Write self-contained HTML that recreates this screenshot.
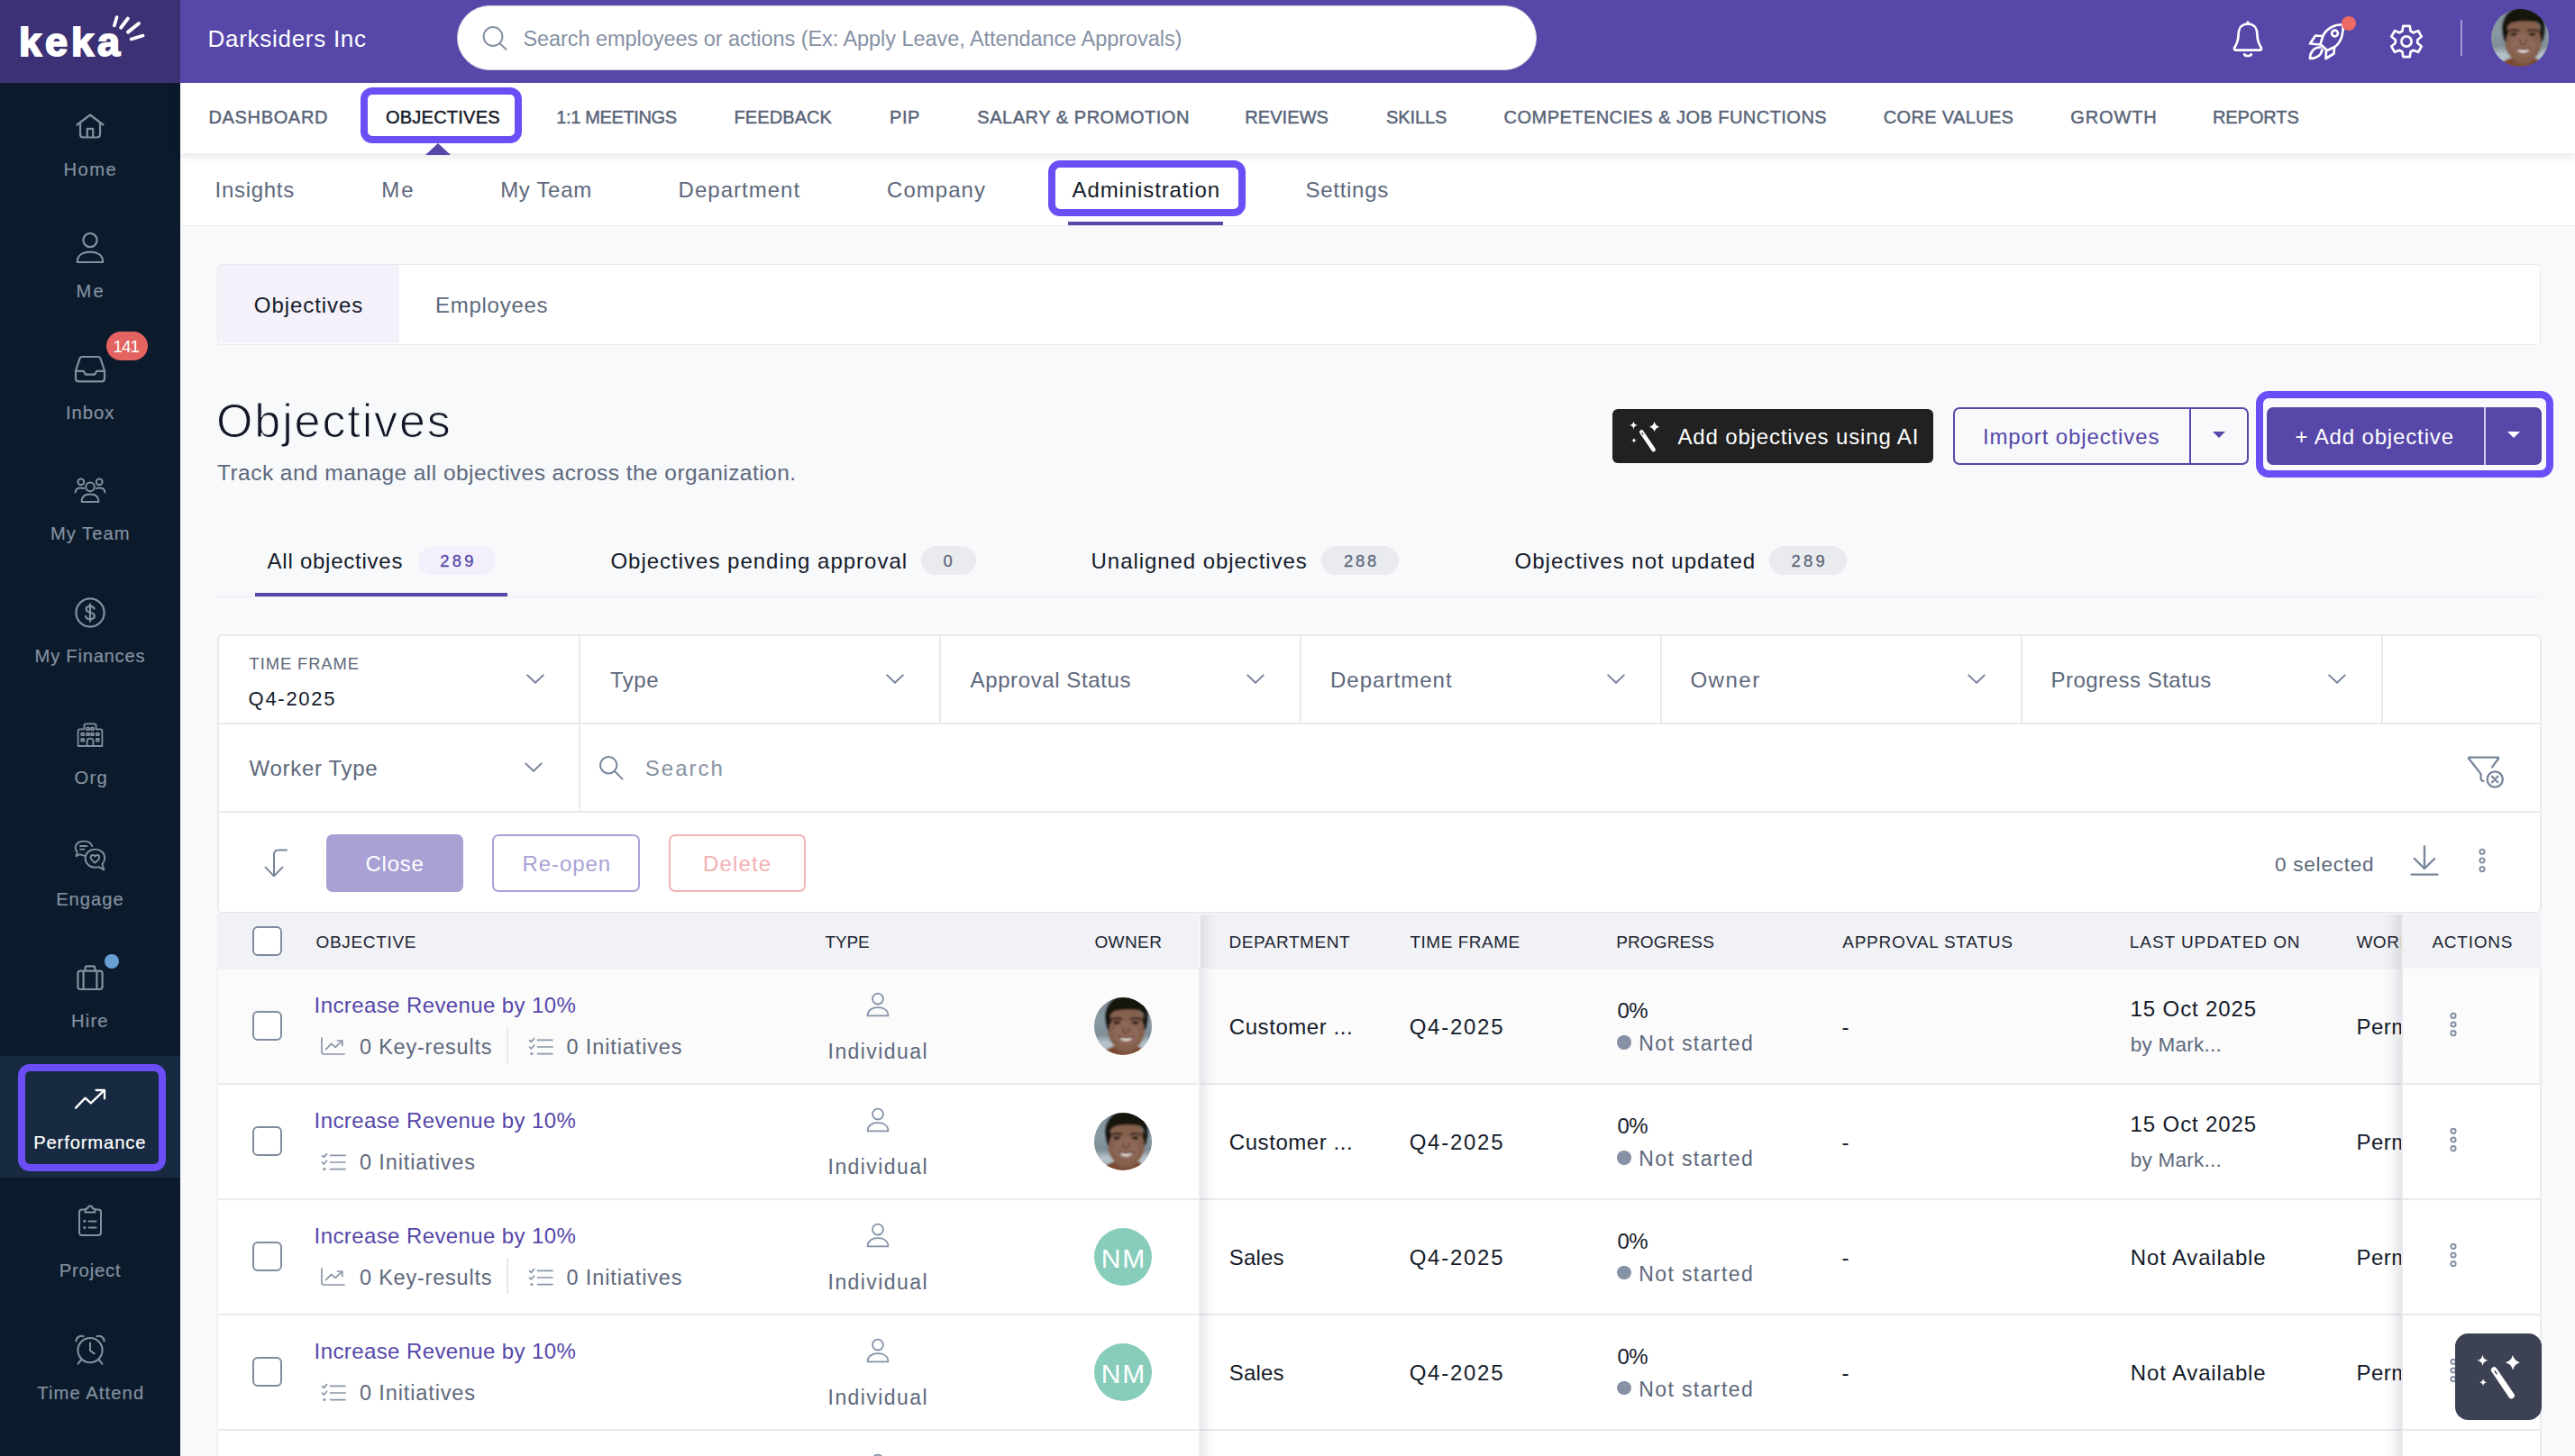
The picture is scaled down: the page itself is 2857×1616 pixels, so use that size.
<!DOCTYPE html>
<html lang="en"><head><meta charset="utf-8"><title>Keka - Objectives</title>
<style>
*{box-sizing:border-box;margin:0;padding:0}
html,body{width:2857px;height:1616px;background:#f8f9fb;font-family:"Liberation Sans", sans-serif;}
#root{position:relative;width:2857px;height:1616px;overflow:hidden}
#root div,#root span.t,#root svg{position:absolute}
#root svg{overflow:visible}
span.t{white-space:nowrap;line-height:1;display:block}
</style></head>
<body><div id="root">
<div style="left:200px;top:0px;width:2657px;height:92px;background:#5647a9;"></div>
<div style="left:0px;top:0px;width:200px;height:92px;background:#3b3174;"></div>
<div style="left:0px;top:92px;width:200px;height:1524px;background:#0c1b2b;"></div>
<span class="t" style="left:24px;top:24px;font-size:45px;color:#fff;font-weight:700;-webkit-text-stroke:2px #fff;letter-spacing:3.973px;margin-left:-3.00px;">keka</span>
<svg style="left:120px;top:12px;" width="48" height="40" viewBox="0 0 48 40" fill="none"><g stroke="#fff" stroke-linecap="round"><path d="M6.8 16.5 L9.6 7" stroke-width="3.6"/><path d="M14.2 18.6 L21.8 8.6" stroke-width="4"/><path d="M22 23.6 L34 14" stroke-width="4"/><path d="M25.6 31.4 L38.6 27.6" stroke-width="3.6"/></g></svg>
<span class="t" style="left:232.5px;top:30px;font-size:26px;color:#fff;letter-spacing:0.719px;margin-left:-2.00px;">Darksiders Inc</span>
<div style="left:506.6px;top:6px;width:1198.6px;height:71.6px;background:#fff;border-radius:36px;border:1.5px solid #d3d4e0;"></div>
<svg style="left:533px;top:27px;" width="32" height="32" viewBox="0 0 32 32" fill="none"><circle cx="14" cy="13.5" r="10.4" stroke="#8590a2" stroke-width="2"/><path d="M21.4 21 L28.4 27.8" stroke="#8590a2" stroke-width="2" stroke-linecap="round"/></svg>
<span class="t" style="left:581.4px;top:32px;font-size:23.5px;color:#8691a4;letter-spacing:-0.047px;margin-left:-1.00px;">Search employees or actions (Ex: Apply Leave, Attendance Approvals)</span>
<svg style="left:2474px;top:20px;" width="40" height="48" viewBox="0 0 40 48" fill="none"><g stroke="#fff" stroke-width="2.7" stroke-linejoin="round" stroke-linecap="round"><path d="M20 4.5 L20 6.5"/><path d="M20 6.5 C12 6.5 9.5 13 9.5 19 C9.5 26 7 30 5.2 33 C4.6 34.2 5.2 35.6 6.8 35.6 L33.2 35.6 C34.8 35.6 35.4 34.2 34.8 33 C33 30 30.5 26 30.5 19 C30.5 13 28 6.5 20 6.5 Z"/><path d="M16.2 40.2 C17 42.6 23 42.6 23.8 40.2"/></g></svg>
<svg style="left:2558px;top:22px;" width="48" height="48" viewBox="0 0 48 48" fill="none"><g stroke="#fff" stroke-width="2.7" stroke-linejoin="round" stroke-linecap="round"><path d="M41.5 5.5 C33 5 24 8.5 19.5 17.5 L16.5 27 L24 34 L32.5 30 C40 24.5 42.5 14 41.5 5.5 Z"/><circle cx="32.5" cy="15" r="3.4"/><path d="M19 18 L11 17.5 L5 26.5 L16 27.5"/><path d="M32 30.5 L31.5 37.5 L22.5 43 L23 34"/><path d="M16.5 30.5 C9 30.5 5 36 5 43 C12 43 17.5 39.5 18.5 33"/></g></svg>
<div style="left:2598px;top:18px;width:16px;height:16px;border-radius:50%;background:#ed6a66"></div>
<svg style="left:2648px;top:24px;" width="44" height="44" viewBox="0 0 44 44" fill="none"><path d="M17.44 10.47 L18.34 4.78 L25.66 4.78 L26.56 10.47 L29.70 12.28 L35.08 10.22 L38.74 16.56 L34.27 20.19 L34.27 23.81 L38.74 27.44 L35.08 33.78 L29.70 31.72 L26.56 33.53 L25.66 39.22 L18.34 39.22 L17.44 33.53 L14.30 31.72 L8.92 33.78 L5.26 27.44 L9.73 23.81 L9.73 20.19 L5.26 16.56 L8.92 10.22 L14.30 12.28 Z" stroke="#fff" stroke-width="2.7" stroke-linejoin="round"/><circle cx="22" cy="22" r="5.6" stroke="#fff" stroke-width="2.7"/></svg>
<div style="left:2730px;top:22px;width:2px;height:40px;background:#a49cd6;"></div>
<svg style="left:2764px;top:10px;" width="64" height="64" viewBox="0 0 64 64" fill="none"><defs><clipPath id="av2796_42"><circle cx="32" cy="32" r="32"/></clipPath><filter id="bl2796_42" x="-10%" y="-10%" width="120%" height="120%"><feGaussianBlur stdDeviation="1.3"/></filter><linearGradient id="bg2796_42" x1="0" y1="0" x2="0" y2="1"><stop offset="0" stop-color="#7f8e96"/><stop offset=".45" stop-color="#8a9aa4"/><stop offset=".62" stop-color="#7d8c95"/><stop offset=".74" stop-color="#b7c3ca"/><stop offset="1" stop-color="#a9b5bc"/></linearGradient></defs><g clip-path="url(#av2796_42)"><g filter="url(#bl2796_42)"><rect x="-6" y="-6" width="76" height="76" fill="url(#bg2796_42)"/><path d="M8 70 C9 58 18 53 35 53 C52 53 60 58 62 70 Z" fill="#7a4a2e"/><path d="M25 50 H46 V58 C41 64 30 64 25 58 Z" fill="#7d5645"/><ellipse cx="35.6" cy="36.5" rx="20.4" ry="23" fill="#85604e"/><ellipse cx="35.6" cy="25" rx="19.6" ry="15" fill="#85604e"/><ellipse cx="35.6" cy="40" rx="14" ry="13" fill="#8e6858"/><path d="M13 30 C8 12 20 -3 36 -3 C52 -3 64 12 59 30 C58 24 55 17 50 14.5 C42 13 30 13 22 15.5 C17 19 14.5 24 13 30 Z" fill="#16130f"/><path d="M13 30 C13.5 26 15 22 18 19 L19 28 C17 29 16.5 33 16.8 37 C14.5 36 13.2 33 13 30 Z" fill="#16130f"/><path d="M59 30 C58.5 26 57 22 54 19 L53.5 28 C55 29 55.5 33 55.2 37 C57.5 36 58.8 33 59 30 Z" fill="#16130f"/><path d="M28.6 44.6 C32 46 39 46 42.2 44.6 C41 49.6 30 49.6 28.6 44.6 Z" fill="#f3ebe6"/><path d="M26.5 43.6 C31 45.2 40 45.2 44.4 43.6" stroke="#5e3c30" stroke-width="1.4" fill="none"/><path d="M19.6 24.6 C23 22.8 27 22.8 30 24 M41 24 C44 22.8 48.4 22.8 51.6 24.6" stroke="#2a1b15" stroke-width="2.2" stroke-linecap="round"/><ellipse cx="25" cy="28" rx="3.8" ry="1.8" fill="#2b1c16"/><ellipse cx="45.4" cy="28" rx="3.8" ry="1.8" fill="#2b1c16"/><path d="M32.4 33 C31.2 37.6 32.4 39.2 35.4 39.4 C38.4 39.2 39.6 37.6 38.4 33" stroke="#6a4838" stroke-width="1.6" fill="none"/></g></g></svg>
<svg style="left:82px;top:124px;" width="36" height="32" viewBox="0 0 36 32" fill="none"><g stroke="#8390a0" stroke-width="2.2" stroke-linecap="round" stroke-linejoin="round"><path d="M3.5 14.5 L18 3.5 L32.5 14.5"/><path d="M7 12.5 V25 C7 27 8 28.5 10.5 28.5 H25.5 C28 28.5 29 27 29 25 V12.5"/><path d="M14.8 28 V18.8 H21.2 V28"/></g></svg>
<span class="t" style="left:71.5px;top:178px;font-size:20.2px;color:#8491a1;-webkit-text-stroke:0.2px #8491a1;letter-spacing:1.493px;margin-left:-1.00px;">Home</span>
<svg style="left:82px;top:256px;" width="36" height="38" viewBox="0 0 36 38" fill="none"><g stroke="#8390a0" stroke-width="2.2" stroke-linecap="round" stroke-linejoin="round"><circle cx="18" cy="10.5" r="7.6"/><path d="M3.8 35 C3.8 27 10 23.6 18 23.6 C26 23.6 32.2 27 32.2 35 Z"/></g></svg>
<span class="t" style="left:85.6px;top:313px;font-size:20.2px;color:#8491a1;-webkit-text-stroke:0.2px #8491a1;letter-spacing:1.984px;margin-left:-1.00px;">Me</span>
<svg style="left:80px;top:393px;" width="40" height="34" viewBox="0 0 40 34" fill="none"><g stroke="#8390a0" stroke-width="2.2" stroke-linecap="round" stroke-linejoin="round"><path d="M4 18.5 L8.6 4.6 C9 3.6 9.8 3 11 3 H29 C30.2 3 31 3.6 31.4 4.6 L36 18.5 V27 C36 29.2 34.8 30.4 32.6 30.4 H7.4 C5.2 30.4 4 29.2 4 27 Z"/><path d="M4 18.8 H12.6 L15 22.6 H25 L27.4 18.8 H36"/></g></svg>
<div style="left:118px;top:368px;width:46px;height:32px;border-radius:16px;background:#e2635f"></div>
<span class="t" style="left:126.4px;top:375px;font-size:19px;color:#fff;letter-spacing:-1.067px;margin-left:-1.00px;">141</span>
<span class="t" style="left:74px;top:448px;font-size:20.2px;color:#8491a1;-webkit-text-stroke:0.2px #8491a1;letter-spacing:0.977px;margin-left:-1.00px;">Inbox</span>
<svg style="left:80px;top:528px;" width="40" height="32" viewBox="0 0 40 32" fill="none"><g stroke="#8390a0" stroke-width="2" stroke-linecap="round" stroke-linejoin="round"><circle cx="20" cy="12.4" r="4.8"/><path d="M10.6 29 C10.6 23 14.6 20.6 20 20.6 C25.4 20.6 29.4 23 29.4 29 Z"/><circle cx="9.8" cy="6.8" r="3.4"/><circle cx="30.2" cy="6.8" r="3.4"/><path d="M3.6 18.4 C3.8 14.8 6.4 13.4 9.8 13.4 C11 13.4 12 13.6 13 14"/><path d="M36.4 18.4 C36.2 14.8 33.6 13.4 30.2 13.4 C29 13.4 28 13.6 27 14"/></g></svg>
<span class="t" style="left:57px;top:582px;font-size:20.2px;color:#8491a1;-webkit-text-stroke:0.2px #8491a1;letter-spacing:0.989px;margin-left:-1.00px;">My Team</span>
<svg style="left:80px;top:660px;" width="40" height="40" viewBox="0 0 40 40" fill="none"><g stroke="#8390a0" stroke-width="2.2" stroke-linecap="round" stroke-linejoin="round"><circle cx="20" cy="20" r="15.6"/><path d="M24.6 15.6 C24 13.6 22.2 12.8 20 12.8 C17.4 12.8 15.6 14 15.6 16.2 C15.6 20.8 24.8 18.6 24.8 23.6 C24.8 26 22.6 27.2 20 27.2 C17.4 27.2 15.6 26.2 15 24"/><path d="M20 10.4 V29.6"/></g></svg>
<span class="t" style="left:39.6px;top:718px;font-size:20.2px;color:#8491a1;-webkit-text-stroke:0.2px #8491a1;letter-spacing:0.746px;margin-left:-1.00px;">My Finances</span>
<svg style="left:82px;top:799px;" width="36" height="32" viewBox="0 0 36 32" fill="none"><g stroke="#8390a0" stroke-width="1.8" stroke-linecap="round" stroke-linejoin="round"><path d="M4.6 29 V12.6 C4.6 11.2 5.4 10.4 6.8 10.4 H11.4 V6.6 C11.4 5.2 12.2 4.4 13.6 4.4 H22.4 C23.8 4.4 24.6 5.2 24.6 6.6 V10.4 H29.2 C30.6 10.4 31.4 11.2 31.4 12.6 V29 Z"/><path d="M14.6 29 V23.4 C14.6 21.6 16 20.6 18 20.6 C20 20.6 21.4 21.6 21.4 23.4 V29"/><rect x="8.2" y="14.6" width="3" height="2.6" rx=".6"/><rect x="8.2" y="21" width="3" height="2.6" rx=".6"/><rect x="24.8" y="14.6" width="3" height="2.6" rx=".6"/><rect x="24.8" y="21" width="3" height="2.6" rx=".6"/><rect x="14" y="8.6" width="3" height="2.6" rx=".6"/><rect x="19" y="8.6" width="3" height="2.6" rx=".6"/><rect x="14" y="14.6" width="3" height="2.6" rx=".6"/><rect x="19" y="14.6" width="3" height="2.6" rx=".6"/></g></svg>
<span class="t" style="left:82.5px;top:853px;font-size:20.2px;color:#8491a1;-webkit-text-stroke:0.2px #8491a1;letter-spacing:1.287px;">Org</span>
<svg style="left:80px;top:930px;" width="40" height="40" viewBox="0 0 40 40" fill="none"><g stroke="#8390a0" stroke-width="1.9" stroke-linecap="round" stroke-linejoin="round"><path d="M13.4 19.6 C11.8 19.4 10.4 19 9 18.2 L4.4 20.2 L5.8 15.8 C4.4 14.4 3.6 12.6 3.6 10.8 C3.6 6.6 7.6 3.6 13 3.6 C17.6 3.6 21.2 5.8 22.2 9"/><path d="M9 9 H16.4 M9 12.6 H13.4" /><path d="M25.4 12.6 C31.4 12.6 36.2 16.6 36.2 22.2 C36.2 24.8 35.2 27.2 33.4 29 L35.4 35.4 L29.4 32.2 C28.2 32.6 26.8 32.8 25.4 32.8 C19.4 32.8 14.6 28.2 14.6 22.6 C14.6 17 19.4 12.6 25.4 12.6 Z"/><path d="M25.4 27.6 C22.4 25.6 20.6 23.8 20.6 21.6 C20.6 20 21.8 19 23 19 C24 19 24.9 19.6 25.4 20.6 C25.9 19.6 26.8 19 27.8 19 C29 19 30.2 20 30.2 21.6 C30.2 23.8 28.4 25.6 25.4 27.6 Z"/></g></svg>
<span class="t" style="left:63.2px;top:988px;font-size:20.2px;color:#8491a1;-webkit-text-stroke:0.2px #8491a1;letter-spacing:0.965px;margin-left:-1.00px;">Engage</span>
<svg style="left:82px;top:1068px;" width="36" height="34" viewBox="0 0 36 34" fill="none"><g stroke="#8390a0" stroke-width="2.2" stroke-linecap="round" stroke-linejoin="round"><rect x="4.4" y="9.6" width="27.2" height="20.4" rx="3"/><path d="M12.6 9.4 V6.6 C12.6 5.2 13.4 4.4 14.8 4.4 H21.2 C22.6 4.4 23.4 5.2 23.4 6.6 V9.4"/><path d="M10.6 10 V29.6 M25.4 10 V29.6"/></g></svg>
<div style="left:116px;top:1058.6px;width:16.4px;height:16.4px;border-radius:50%;background:#6a9fd6"></div>
<span class="t" style="left:80px;top:1123px;font-size:20.2px;color:#8491a1;-webkit-text-stroke:0.2px #8491a1;letter-spacing:1.171px;margin-left:-1.00px;">Hire</span>
<div style="left:0px;top:1172px;width:200px;height:134.5px;background:#172a41;"></div>
<div style="left:20.3px;top:1181.3px;width:163.7px;height:119px;background:transparent;border:8.5px solid #6b4ef6;border-radius:13px;"></div>
<svg style="left:80px;top:1204px;" width="40" height="32" viewBox="0 0 40 32" fill="none"><g stroke="#fff" stroke-width="2.3" stroke-linecap="round" stroke-linejoin="round"><path d="M4 25.6 L14.6 14.6 L20.8 20.4 L35.4 6.4"/><path d="M26.6 6 H36 V15.4"/></g></svg>
<span class="t" style="left:38.2px;top:1258px;font-size:20.2px;color:#fff;-webkit-text-stroke:0.2px #fff;letter-spacing:0.866px;margin-left:-1.00px;">Performance</span>
<svg style="left:84px;top:1335px;" width="32" height="40" viewBox="0 0 32 40" fill="none"><g stroke="#8390a0" stroke-width="2" stroke-linecap="round" stroke-linejoin="round"><path d="M11.4 7.4 H7 C5 7.4 4 8.4 4 10.4 V33 C4 35 5 36 7 36 H25 C27 36 28 35 28 33 V10.4 C28 8.4 27 7.4 25 7.4 H20.6"/><path d="M10.6 10.6 H21.4 V8 C21.4 6.8 20.6 6.2 19.6 6.2 H18.6 C18.6 4.6 17.6 3.6 16 3.6 C14.4 3.6 13.4 4.6 13.4 6.2 H12.4 C11.4 6.2 10.6 6.8 10.6 8 Z"/><path d="M14.6 20.4 H22.6 M14.6 27.6 H22.6"/><path d="M9.6 20.4 H10 M9.6 27.6 H10" stroke-width="2.8"/></g></svg>
<span class="t" style="left:66.7px;top:1400px;font-size:20.2px;color:#8491a1;-webkit-text-stroke:0.2px #8491a1;letter-spacing:0.847px;margin-left:-1.00px;">Project</span>
<svg style="left:80px;top:1478px;" width="40" height="40" viewBox="0 0 40 40" fill="none"><g stroke="#8390a0" stroke-width="2.1" stroke-linecap="round" stroke-linejoin="round"><circle cx="20" cy="20.6" r="13.6"/><path d="M20 12.6 V21 L24.6 24.4"/><path d="M4.4 10.4 C4.4 6.6 8.6 3.6 12.6 5.2 M35.6 10.4 C35.6 6.6 31.4 3.6 27.4 5.2"/><path d="M10.4 30.8 L6.6 35.6 M29.6 30.8 L33.4 35.6"/></g></svg>
<span class="t" style="left:41.3px;top:1536px;font-size:20.2px;color:#8491a1;-webkit-text-stroke:0.2px #8491a1;letter-spacing:1.084px;">Time Attend</span>
<div style="left:200px;top:170px;width:2657px;height:80.5px;background:#fff;border-bottom:1.5px solid #e8eaee;"></div>
<div style="left:200px;top:92px;width:2657px;height:78px;background:#fff;box-shadow:0 3px 10px rgba(30,40,70,.13);"></div>
<span class="t" style="left:232.4px;top:120px;font-size:20px;color:#586478;-webkit-text-stroke:0.45px #586478;letter-spacing:0.669px;margin-left:-1.00px;">DASHBOARD</span>
<span class="t" style="left:618.2px;top:120px;font-size:20px;color:#586478;-webkit-text-stroke:0.45px #586478;letter-spacing:-0.352px;margin-left:-1.00px;">1:1 MEETINGS</span>
<span class="t" style="left:815.5px;top:120px;font-size:20px;color:#586478;-webkit-text-stroke:0.45px #586478;letter-spacing:0.091px;margin-left:-1.00px;">FEEDBACK</span>
<span class="t" style="left:988px;top:120px;font-size:20px;color:#586478;-webkit-text-stroke:0.45px #586478;letter-spacing:0.552px;margin-left:-1.00px;">PIP</span>
<span class="t" style="left:1084.3px;top:120px;font-size:20px;color:#586478;-webkit-text-stroke:0.45px #586478;letter-spacing:0.535px;">SALARY &amp; PROMOTION</span>
<span class="t" style="left:1382.3px;top:120px;font-size:20px;color:#586478;-webkit-text-stroke:0.45px #586478;letter-spacing:0.067px;margin-left:-1.00px;">REVIEWS</span>
<span class="t" style="left:1538px;top:120px;font-size:20px;color:#586478;-webkit-text-stroke:0.45px #586478;letter-spacing:-0.096px;">SKILLS</span>
<span class="t" style="left:1669.6px;top:120px;font-size:20px;color:#586478;-webkit-text-stroke:0.45px #586478;letter-spacing:0.461px;margin-left:-1.00px;">COMPETENCIES &amp; JOB FUNCTIONS</span>
<span class="t" style="left:2090.7px;top:120px;font-size:20px;color:#586478;-webkit-text-stroke:0.45px #586478;letter-spacing:0.346px;margin-left:-1.00px;">CORE VALUES</span>
<span class="t" style="left:2298.3px;top:120px;font-size:20px;color:#586478;-webkit-text-stroke:0.45px #586478;letter-spacing:0.870px;margin-left:-1.00px;">GROWTH</span>
<span class="t" style="left:2456px;top:120px;font-size:20px;color:#586478;-webkit-text-stroke:0.45px #586478;letter-spacing:-0.080px;margin-left:-1.00px;">REPORTS</span>
<div style="left:472px;top:158.6px;width:0;height:0;border-left:14px solid transparent;border-right:14px solid transparent;border-bottom:13.2px solid #5647a9"></div>
<div style="left:399.8px;top:97px;width:179.6px;height:62px;background:#fff;border:8.4px solid #6b4ef6;border-radius:13px;"></div>
<span class="t" style="left:428px;top:120px;font-size:20px;color:#141a29;-webkit-text-stroke:0.45px #141a29;letter-spacing:0.230px;">OBJECTIVES</span>
<span class="t" style="left:240.6px;top:199px;font-size:24px;color:#5d687b;letter-spacing:0.698px;margin-left:-2.00px;">Insights</span>
<span class="t" style="left:424.3px;top:199px;font-size:24px;color:#5d687b;letter-spacing:1.908px;margin-left:-1.00px;">Me</span>
<span class="t" style="left:556.2px;top:199px;font-size:24px;color:#5d687b;letter-spacing:0.674px;margin-left:-1.00px;">My Team</span>
<span class="t" style="left:753.6px;top:199px;font-size:24px;color:#5d687b;letter-spacing:1.009px;margin-left:-1.00px;">Department</span>
<span class="t" style="left:985px;top:199px;font-size:24px;color:#5d687b;letter-spacing:1.048px;margin-left:-1.00px;">Company</span>
<span class="t" style="left:1449.5px;top:199px;font-size:24px;color:#5d687b;letter-spacing:0.712px;margin-left:-1.00px;">Settings</span>
<div style="left:1185px;top:246px;width:171.8px;height:3.9px;background:#5647a9;"></div>
<div style="left:1162.5px;top:178px;width:219px;height:62.4px;background:#fff;border:8.4px solid #6b4ef6;border-radius:13px;"></div>
<span class="t" style="left:1189.6px;top:199px;font-size:24px;color:#141a29;letter-spacing:0.883px;">Administration</span>
<div style="left:240.8px;top:293px;width:2578.4px;height:89.6px;background:#fff;border:1.5px solid #e8eaee;border-radius:4px;"></div>
<div style="left:242px;top:294.2px;width:200.6px;height:87.2px;background:#f4f1fb;border-radius:3px 0 0 3px;"></div>
<span class="t" style="left:282.8px;top:327px;font-size:24px;color:#141a29;letter-spacing:0.929px;margin-left:-1.00px;">Objectives</span>
<span class="t" style="left:484px;top:327px;font-size:24px;color:#5d687b;letter-spacing:0.735px;margin-left:-1.00px;">Employees</span>
<span class="t" style="left:242px;top:441px;font-size:52px;color:#111726;letter-spacing:1.893px;margin-left:-2.00px;-webkit-text-stroke:1.1px #f8f9fb;">Objectives</span>
<span class="t" style="left:241px;top:513px;font-size:24.5px;color:#5d687b;letter-spacing:0.448px;">Track and manage all objectives across the organization.</span>
<div style="left:1789px;top:453.6px;width:356px;height:60px;background:#212121;border-radius:6px;"></div>
<svg style="left:1807.54px;top:467.94px;" width="33.12" height="33.12" viewBox="0 0 48 48" fill="none"><path d="M19.3 16.6 L38.5 45" stroke="#fff" stroke-width="6.7" stroke-linecap="round"/><path d="M20.1 17.8 L22 20.7" stroke="#212121" stroke-width="1.5" stroke-linecap="round"/><path d="M40 0 Q41.64 6.56 48.2 8.2 Q41.64 9.84 40 16.4 Q38.36 9.84 31.8 8.2 Q38.36 6.56 40 0 Z" fill="#fff"/><path d="M6.5 -0.6 Q7.204 5.096 12.9 5.8 Q7.204 6.504 6.5 12.2 Q5.796 6.504 0.1 5.8 Q5.796 5.096 6.5 -0.6 Z" fill="#fff"/><path d="M7.1 26.1 Q7.51 29.79 11.2 30.2 Q7.51 30.61 7.1 34.3 Q6.69 30.61 3 30.2 Q6.69 29.79 7.1 26.1 Z" fill="#fff"/></svg>
<span class="t" style="left:1861.4px;top:473px;font-size:24px;color:#fff;letter-spacing:0.854px;">Add objectives using AI</span>
<div style="left:2167.4px;top:452px;width:327.4px;height:64px;background:transparent;border:2px solid #5647a9;border-radius:7px;"></div>
<div style="left:2429.4px;top:453px;width:2px;height:62px;background:#5647a9;"></div>
<span class="t" style="left:2201.9px;top:473px;font-size:24px;color:#5647a9;letter-spacing:0.881px;margin-left:-2.00px;">Import objectives</span>
<div style="left:2455px;top:478.8px;width:0;height:0;border-left:7px solid transparent;border-right:7px solid transparent;border-top:7px solid #5647a9"></div>
<div style="left:2502.8px;top:434.2px;width:330px;height:95.6px;background:transparent;border:8px solid #6b4ef6;border-radius:14px;"></div>
<div style="left:2515.2px;top:452px;width:305px;height:64px;background:#5647a9;border-radius:7px;"></div>
<div style="left:2756px;top:452px;width:2px;height:64px;background:#cfcaea;"></div>
<span class="t" style="left:2547.6px;top:473px;font-size:24px;color:#fff;letter-spacing:0.855px;margin-left:-1.00px;">+ Add objective</span>
<div style="left:2782.4px;top:478.8px;width:0;height:0;border-left:7px solid transparent;border-right:7px solid transparent;border-top:7px solid #fff"></div>
<div style="left:240.8px;top:661.6px;width:2578.4px;height:1.8px;background:#e8eaee;"></div>
<div style="left:282.9px;top:658px;width:280px;height:4px;background:#5647a9;"></div>
<span class="t" style="left:296.6px;top:611px;font-size:24px;color:#141a29;letter-spacing:0.749px;">All objectives</span>
<div style="left:464px;top:606px;width:85.6px;height:32px;background:#f3f0fc;border-radius:16px;"></div>
<span class="t" style="left:488.2px;top:614px;font-size:18.4px;color:#5647a9;-webkit-text-stroke:0.3px #5647a9;letter-spacing:3.272px;">289</span>
<span class="t" style="left:678.4px;top:611px;font-size:24px;color:#141a29;letter-spacing:0.995px;margin-left:-1.00px;">Objectives pending approval</span>
<div style="left:1022px;top:606px;width:60.8px;height:32px;background:#e9ebef;border-radius:16px;"></div>
<span class="t" style="left:1046.4px;top:614px;font-size:18.4px;color:#5d687b;-webkit-text-stroke:0.3px #5d687b;">0</span>
<span class="t" style="left:1211.6px;top:611px;font-size:24px;color:#141a29;letter-spacing:0.933px;margin-left:-1.00px;">Unaligned objectives</span>
<div style="left:1466px;top:606px;width:85.6px;height:32px;background:#e9ebef;border-radius:16px;"></div>
<span class="t" style="left:1491px;top:614px;font-size:18.4px;color:#5d687b;-webkit-text-stroke:0.3px #5d687b;letter-spacing:2.772px;">288</span>
<span class="t" style="left:1681.6px;top:611px;font-size:24px;color:#141a29;letter-spacing:1.002px;margin-left:-1.00px;">Objectives not updated</span>
<div style="left:1963px;top:606px;width:85.6px;height:32px;background:#e9ebef;border-radius:16px;"></div>
<span class="t" style="left:1987.4px;top:614px;font-size:18.4px;color:#5d687b;-webkit-text-stroke:0.3px #5d687b;letter-spacing:3.272px;">289</span>
<div style="left:241.2px;top:704.4px;width:2578.6px;height:309.6px;background:#fff;border:2px solid #e8eaee;border-radius:6px;"></div>
<div style="left:242px;top:802.2px;width:2577px;height:2px;background:#e8eaee;"></div>
<div style="left:242px;top:900.2px;width:2577px;height:2px;background:#e8eaee;"></div>
<div style="left:641.8px;top:705px;width:2px;height:98px;background:#e8eaee;"></div>
<div style="left:1041.8px;top:705px;width:2px;height:98px;background:#e8eaee;"></div>
<div style="left:1441.8px;top:705px;width:2px;height:98px;background:#e8eaee;"></div>
<div style="left:1841.8px;top:705px;width:2px;height:98px;background:#e8eaee;"></div>
<div style="left:2241.8px;top:705px;width:2px;height:98px;background:#e8eaee;"></div>
<div style="left:2641.8px;top:705px;width:2px;height:98px;background:#e8eaee;"></div>
<div style="left:641.8px;top:803px;width:2px;height:98px;background:#e8eaee;"></div>
<span class="t" style="left:276.6px;top:728px;font-size:18.4px;color:#5d687b;letter-spacing:0.885px;">TIME FRAME</span>
<span class="t" style="left:276.6px;top:765px;font-size:22px;color:#141a29;letter-spacing:1.703px;margin-left:-1.00px;">Q4-2025</span>
<svg style="left:584.2px;top:748.4px;" width="20" height="12" viewBox="0 0 20 12" fill="none"><path d="M1.2 1.4 L10 9.8 L18.8 1.4" stroke="#78859a" stroke-width="2" stroke-linecap="round" stroke-linejoin="round"/></svg>
<span class="t" style="left:677px;top:743px;font-size:24px;color:#5d687b;letter-spacing:0.505px;">Type</span>
<svg style="left:982.6px;top:748.4px;" width="20" height="12" viewBox="0 0 20 12" fill="none"><path d="M1.2 1.4 L10 9.8 L18.8 1.4" stroke="#78859a" stroke-width="2" stroke-linecap="round" stroke-linejoin="round"/></svg>
<span class="t" style="left:1076.6px;top:743px;font-size:24px;color:#5d687b;letter-spacing:0.598px;">Approval Status</span>
<svg style="left:1382.6px;top:748.4px;" width="20" height="12" viewBox="0 0 20 12" fill="none"><path d="M1.2 1.4 L10 9.8 L18.8 1.4" stroke="#78859a" stroke-width="2" stroke-linecap="round" stroke-linejoin="round"/></svg>
<span class="t" style="left:1477px;top:743px;font-size:24px;color:#5d687b;letter-spacing:1.031px;margin-left:-1.00px;">Department</span>
<svg style="left:1782.6px;top:748.4px;" width="20" height="12" viewBox="0 0 20 12" fill="none"><path d="M1.2 1.4 L10 9.8 L18.8 1.4" stroke="#78859a" stroke-width="2" stroke-linecap="round" stroke-linejoin="round"/></svg>
<span class="t" style="left:1876.4px;top:743px;font-size:24px;color:#5d687b;letter-spacing:1.526px;margin-left:-1.00px;">Owner</span>
<svg style="left:2182.6px;top:748.4px;" width="20" height="12" viewBox="0 0 20 12" fill="none"><path d="M1.2 1.4 L10 9.8 L18.8 1.4" stroke="#78859a" stroke-width="2" stroke-linecap="round" stroke-linejoin="round"/></svg>
<span class="t" style="left:2276.4px;top:743px;font-size:24px;color:#5d687b;letter-spacing:0.504px;margin-left:-1.00px;">Progress Status</span>
<svg style="left:2582.6px;top:748.4px;" width="20" height="12" viewBox="0 0 20 12" fill="none"><path d="M1.2 1.4 L10 9.8 L18.8 1.4" stroke="#78859a" stroke-width="2" stroke-linecap="round" stroke-linejoin="round"/></svg>
<span class="t" style="left:276.6px;top:841px;font-size:24px;color:#5d687b;letter-spacing:0.685px;">Worker Type</span>
<svg style="left:582.2px;top:846.4px;" width="20" height="12" viewBox="0 0 20 12" fill="none"><path d="M1.2 1.4 L10 9.8 L18.8 1.4" stroke="#78859a" stroke-width="2" stroke-linecap="round" stroke-linejoin="round"/></svg>
<svg style="left:664px;top:838px;" width="30" height="30" viewBox="0 0 30 30" fill="none"><circle cx="11.2" cy="11.2" r="9.2" stroke="#78859a" stroke-width="2"/><path d="M18 18 L26.6 26.6" stroke="#78859a" stroke-width="2" stroke-linecap="round"/></svg>
<span class="t" style="left:716.8px;top:841px;font-size:24px;color:#8791a3;letter-spacing:2.021px;margin-left:-1.00px;">Search</span>
<svg style="left:2734px;top:836px;" width="48" height="42" viewBox="0 0 48 42" fill="none"><g stroke="#78859a" stroke-width="2.3" stroke-linecap="round" stroke-linejoin="round"><path d="M31 15.4 L38 6 C38.6 5.2 38.2 4.6 37.4 4.6 H6 C5 4.6 4.6 5.2 5.2 6 L17.6 21.6 C18.4 22.6 18.6 23 18.6 24 V28.6 C18.6 29.4 18.8 29.8 19.6 30.2 L21.4 31"/><circle cx="34.2" cy="29" r="8.6" fill="#fff"/><path d="M31 25.8 L37.4 32.2 M37.4 25.8 L31 32.2"/></g></svg>
<svg style="left:290px;top:940px;" width="32" height="36" viewBox="0 0 32 36" fill="none"><g stroke="#78859a" stroke-width="2" stroke-linecap="round" stroke-linejoin="round"><path d="M28 3.6 H19 C15.6 3.6 14 5.2 14 8.6 V32"/><path d="M4.6 22.6 L14 32.4 L23.4 22.6"/></g></svg>
<div style="left:362px;top:926.4px;width:151.8px;height:63.4px;background:#a9a0d4;border-radius:7px;"></div>
<span class="t" style="left:406.4px;top:947px;font-size:24px;color:#fff;letter-spacing:0.797px;margin-left:-1.00px;">Close</span>
<div style="left:546.4px;top:926.4px;width:163.2px;height:63.4px;background:#fff;border:2px solid #aaa1d8;border-radius:7px;"></div>
<span class="t" style="left:580.6px;top:947px;font-size:24px;color:#aaa2d6;letter-spacing:0.914px;margin-left:-1.00px;">Re-open</span>
<div style="left:742.2px;top:926.4px;width:151.4px;height:63.4px;background:#fff;border:2px solid #f3b2b4;border-radius:7px;"></div>
<span class="t" style="left:781px;top:947px;font-size:24px;color:#f2b0b2;letter-spacing:1.155px;margin-left:-1.00px;">Delete</span>
<span class="t" style="left:2524px;top:949px;font-size:22.5px;color:#5d687b;letter-spacing:0.772px;">0 selected</span>
<svg style="left:2672px;top:936px;" width="36" height="38" viewBox="0 0 36 38" fill="none"><g stroke="#78859a" stroke-width="2.4" stroke-linecap="round" stroke-linejoin="round"><path d="M18 3.4 V27.6"/><path d="M6.8 17 L18 28 L29.2 17"/><path d="M3.6 34.6 H32.4"/></g></svg>
<svg style="left:2747.9px;top:939px;" width="12" height="32" viewBox="0 0 12 32" fill="none"><g stroke="#8591a4" stroke-width="2"><circle cx="6" cy="6.3" r="2.6"/><circle cx="6" cy="16" r="2.6"/><circle cx="6" cy="25.7" r="2.6"/></g></svg>
<div style="left:240.6px;top:1014.6px;width:2579px;height:60.6px;background:#f1f2f5;"></div>
<div style="left:279.8px;top:1028.2px;width:33px;height:33px;background:#fff;border:2.5px solid #7f8b9e;border-radius:6px;"></div>
<span class="t" style="left:350.6px;top:1036px;font-size:19px;color:#1d2433;letter-spacing:0.662px;">OBJECTIVE</span>
<span class="t" style="left:915.4px;top:1036px;font-size:19px;color:#1d2433;letter-spacing:-0.117px;">TYPE</span>
<span class="t" style="left:1214.4px;top:1036px;font-size:19px;color:#1d2433;letter-spacing:0.424px;">OWNER</span>
<span class="t" style="left:1364.4px;top:1036px;font-size:19px;color:#1d2433;letter-spacing:0.563px;margin-left:-1.00px;">DEPARTMENT</span>
<span class="t" style="left:1564.4px;top:1036px;font-size:19px;color:#1d2433;letter-spacing:0.523px;">TIME FRAME</span>
<span class="t" style="left:1794.2px;top:1036px;font-size:19px;color:#1d2433;letter-spacing:0.140px;margin-left:-1.00px;">PROGRESS</span>
<span class="t" style="left:2044.2px;top:1036px;font-size:19px;color:#1d2433;letter-spacing:0.789px;">APPROVAL STATUS</span>
<span class="t" style="left:2363.8px;top:1036px;font-size:19px;color:#1d2433;letter-spacing:0.941px;margin-left:-1.00px;">LAST UPDATED ON</span>
<div style="left:241.6px;top:1075.2px;width:2577px;height:126.8px;background:#fbfbfc;"></div>
<div style="left:241.6px;top:1202px;width:2577px;height:2px;background:#e8eaee;"></div>
<div style="left:279.8px;top:1122.4px;width:33px;height:33px;background:#fff;border:2.5px solid #7f8b9e;border-radius:6px;"></div>
<span class="t" style="left:350.6px;top:1104px;font-size:24px;color:#5647a9;letter-spacing:0.401px;margin-left:-2.00px;">Increase Revenue by 10%</span>
<svg style="left:355.4px;top:1150.2px;" width="30" height="22" viewBox="0 0 30 22" fill="none"><g stroke="#8a95a8" stroke-width="1.7" stroke-linecap="round" stroke-linejoin="round"><path d="M2 2 V17.6 C2 19.2 2.8 20 4.4 20 H27"/><path d="M6.6 14.6 L12.6 8.4 L17 12.4 L24.4 5.4"/><path d="M19.4 5 H24.8 V10.4"/></g></svg>
<span class="t" style="left:399px;top:1151px;font-size:23.5px;color:#5d687b;letter-spacing:0.776px;">0 Key-results</span>
<div style="left:562.2px;top:1140.6px;width:1.8px;height:39.6px;background:#e5e8ec;"></div>
<svg style="left:585.6px;top:1150.8px;" width="30" height="22" viewBox="0 0 30 22" fill="none"><g stroke="#8a95a8" stroke-width="1.7" stroke-linecap="round" stroke-linejoin="round"><path d="M10.6 3.4 H27 M10.6 11 H27 M10.6 18.6 H27"/><path d="M1.6 3.6 L3.4 5.4 L6.6 1.6 M1.6 11.2 L3.4 13 L6.6 9.2"/><path d="M3.6 18.6 H4.2" stroke-width="2.8"/></g></svg>
<span class="t" style="left:628.5px;top:1151px;font-size:23.5px;color:#5d687b;letter-spacing:0.874px;">0 Initiatives</span>
<svg style="left:960.9px;top:1101.2px;" width="26" height="28" viewBox="0 0 26 28" fill="none"><g stroke="#8391a7" stroke-width="1.8" stroke-linejoin="round"><circle cx="13" cy="7.6" r="5.9"/><path d="M1.6 26.4 C1.6 20 6.6 17.2 13 17.2 C19.4 17.2 24.4 20 24.4 26.4 Z"/></g></svg>
<span class="t" style="left:920.6px;top:1156px;font-size:23px;color:#5d687b;letter-spacing:1.415px;margin-left:-2.00px;">Individual</span>
<svg style="left:1213.9px;top:1106.8px;" width="64" height="64" viewBox="0 0 64 64" fill="none"><defs><clipPath id="av1245_1138"><circle cx="32" cy="32" r="32"/></clipPath><filter id="bl1245_1138" x="-10%" y="-10%" width="120%" height="120%"><feGaussianBlur stdDeviation="1.3"/></filter><linearGradient id="bg1245_1138" x1="0" y1="0" x2="0" y2="1"><stop offset="0" stop-color="#7f8e96"/><stop offset=".45" stop-color="#8a9aa4"/><stop offset=".62" stop-color="#7d8c95"/><stop offset=".74" stop-color="#b7c3ca"/><stop offset="1" stop-color="#a9b5bc"/></linearGradient></defs><g clip-path="url(#av1245_1138)"><g filter="url(#bl1245_1138)"><rect x="-6" y="-6" width="76" height="76" fill="url(#bg1245_1138)"/><path d="M8 70 C9 58 18 53 35 53 C52 53 60 58 62 70 Z" fill="#7a4a2e"/><path d="M25 50 H46 V58 C41 64 30 64 25 58 Z" fill="#7d5645"/><ellipse cx="35.6" cy="36.5" rx="20.4" ry="23" fill="#85604e"/><ellipse cx="35.6" cy="25" rx="19.6" ry="15" fill="#85604e"/><ellipse cx="35.6" cy="40" rx="14" ry="13" fill="#8e6858"/><path d="M13 30 C8 12 20 -3 36 -3 C52 -3 64 12 59 30 C58 24 55 17 50 14.5 C42 13 30 13 22 15.5 C17 19 14.5 24 13 30 Z" fill="#16130f"/><path d="M13 30 C13.5 26 15 22 18 19 L19 28 C17 29 16.5 33 16.8 37 C14.5 36 13.2 33 13 30 Z" fill="#16130f"/><path d="M59 30 C58.5 26 57 22 54 19 L53.5 28 C55 29 55.5 33 55.2 37 C57.5 36 58.8 33 59 30 Z" fill="#16130f"/><path d="M28.6 44.6 C32 46 39 46 42.2 44.6 C41 49.6 30 49.6 28.6 44.6 Z" fill="#f3ebe6"/><path d="M26.5 43.6 C31 45.2 40 45.2 44.4 43.6" stroke="#5e3c30" stroke-width="1.4" fill="none"/><path d="M19.6 24.6 C23 22.8 27 22.8 30 24 M41 24 C44 22.8 48.4 22.8 51.6 24.6" stroke="#2a1b15" stroke-width="2.2" stroke-linecap="round"/><ellipse cx="25" cy="28" rx="3.8" ry="1.8" fill="#2b1c16"/><ellipse cx="45.4" cy="28" rx="3.8" ry="1.8" fill="#2b1c16"/><path d="M32.4 33 C31.2 37.6 32.4 39.2 35.4 39.4 C38.4 39.2 39.6 37.6 38.4 33" stroke="#6a4838" stroke-width="1.6" fill="none"/></g></g></svg>
<span class="t" style="left:1364.8px;top:1128px;font-size:24px;color:#141a29;letter-spacing:0.561px;margin-left:-1.00px;">Customer ...</span>
<span class="t" style="left:1564.7px;top:1128px;font-size:24px;color:#141a29;letter-spacing:1.742px;margin-left:-1.00px;">Q4-2025</span>
<span class="t" style="left:1794.6px;top:1110px;font-size:24px;color:#141a29;letter-spacing:-0.648px;">0%</span>
<div style="left:1794.2px;top:1149px;width:15.6px;height:15.6px;border-radius:50%;background:#8791a5"></div>
<span class="t" style="left:1819.2px;top:1147px;font-size:23px;color:#5d687b;letter-spacing:1.400px;margin-left:-1.00px;">Not started</span>
<span class="t" style="left:2044.4px;top:1128px;font-size:24px;color:#141a29;margin-left:-1.00px;">-</span>
<span class="t" style="left:2364.6px;top:1108px;font-size:24px;color:#141a29;letter-spacing:0.879px;margin-left:-1.00px;">15 Oct 2025</span>
<span class="t" style="left:2364.8px;top:1149px;font-size:22.5px;color:#5d687b;letter-spacing:0.254px;margin-left:-1.00px;">by Mark...</span>
<span class="t" style="left:2615.4px;top:1128px;font-size:24px;color:#141a29;margin-left:-1.00px;letter-spacing:0.5px;">Permanent</span>
<div style="left:241.6px;top:1204px;width:2577px;height:125.8px;background:#fff;"></div>
<div style="left:241.6px;top:1329.8px;width:2577px;height:2px;background:#e8eaee;"></div>
<div style="left:279.8px;top:1250.4px;width:33px;height:33px;background:#fff;border:2.5px solid #7f8b9e;border-radius:6px;"></div>
<span class="t" style="left:350.6px;top:1232px;font-size:24px;color:#5647a9;letter-spacing:0.401px;margin-left:-2.00px;">Increase Revenue by 10%</span>
<svg style="left:355.6px;top:1278.8px;" width="30" height="22" viewBox="0 0 30 22" fill="none"><g stroke="#8a95a8" stroke-width="1.7" stroke-linecap="round" stroke-linejoin="round"><path d="M10.6 3.4 H27 M10.6 11 H27 M10.6 18.6 H27"/><path d="M1.6 3.6 L3.4 5.4 L6.6 1.6 M1.6 11.2 L3.4 13 L6.6 9.2"/><path d="M3.6 18.6 H4.2" stroke-width="2.8"/></g></svg>
<span class="t" style="left:399px;top:1279px;font-size:23.5px;color:#5d687b;letter-spacing:0.874px;">0 Initiatives</span>
<svg style="left:960.9px;top:1229.2px;" width="26" height="28" viewBox="0 0 26 28" fill="none"><g stroke="#8391a7" stroke-width="1.8" stroke-linejoin="round"><circle cx="13" cy="7.6" r="5.9"/><path d="M1.6 26.4 C1.6 20 6.6 17.2 13 17.2 C19.4 17.2 24.4 20 24.4 26.4 Z"/></g></svg>
<span class="t" style="left:920.6px;top:1284px;font-size:23px;color:#5d687b;letter-spacing:1.415px;margin-left:-2.00px;">Individual</span>
<svg style="left:1213.9px;top:1234.8px;" width="64" height="64" viewBox="0 0 64 64" fill="none"><defs><clipPath id="av1245_1266"><circle cx="32" cy="32" r="32"/></clipPath><filter id="bl1245_1266" x="-10%" y="-10%" width="120%" height="120%"><feGaussianBlur stdDeviation="1.3"/></filter><linearGradient id="bg1245_1266" x1="0" y1="0" x2="0" y2="1"><stop offset="0" stop-color="#7f8e96"/><stop offset=".45" stop-color="#8a9aa4"/><stop offset=".62" stop-color="#7d8c95"/><stop offset=".74" stop-color="#b7c3ca"/><stop offset="1" stop-color="#a9b5bc"/></linearGradient></defs><g clip-path="url(#av1245_1266)"><g filter="url(#bl1245_1266)"><rect x="-6" y="-6" width="76" height="76" fill="url(#bg1245_1266)"/><path d="M8 70 C9 58 18 53 35 53 C52 53 60 58 62 70 Z" fill="#7a4a2e"/><path d="M25 50 H46 V58 C41 64 30 64 25 58 Z" fill="#7d5645"/><ellipse cx="35.6" cy="36.5" rx="20.4" ry="23" fill="#85604e"/><ellipse cx="35.6" cy="25" rx="19.6" ry="15" fill="#85604e"/><ellipse cx="35.6" cy="40" rx="14" ry="13" fill="#8e6858"/><path d="M13 30 C8 12 20 -3 36 -3 C52 -3 64 12 59 30 C58 24 55 17 50 14.5 C42 13 30 13 22 15.5 C17 19 14.5 24 13 30 Z" fill="#16130f"/><path d="M13 30 C13.5 26 15 22 18 19 L19 28 C17 29 16.5 33 16.8 37 C14.5 36 13.2 33 13 30 Z" fill="#16130f"/><path d="M59 30 C58.5 26 57 22 54 19 L53.5 28 C55 29 55.5 33 55.2 37 C57.5 36 58.8 33 59 30 Z" fill="#16130f"/><path d="M28.6 44.6 C32 46 39 46 42.2 44.6 C41 49.6 30 49.6 28.6 44.6 Z" fill="#f3ebe6"/><path d="M26.5 43.6 C31 45.2 40 45.2 44.4 43.6" stroke="#5e3c30" stroke-width="1.4" fill="none"/><path d="M19.6 24.6 C23 22.8 27 22.8 30 24 M41 24 C44 22.8 48.4 22.8 51.6 24.6" stroke="#2a1b15" stroke-width="2.2" stroke-linecap="round"/><ellipse cx="25" cy="28" rx="3.8" ry="1.8" fill="#2b1c16"/><ellipse cx="45.4" cy="28" rx="3.8" ry="1.8" fill="#2b1c16"/><path d="M32.4 33 C31.2 37.6 32.4 39.2 35.4 39.4 C38.4 39.2 39.6 37.6 38.4 33" stroke="#6a4838" stroke-width="1.6" fill="none"/></g></g></svg>
<span class="t" style="left:1364.8px;top:1256px;font-size:24px;color:#141a29;letter-spacing:0.561px;margin-left:-1.00px;">Customer ...</span>
<span class="t" style="left:1564.7px;top:1256px;font-size:24px;color:#141a29;letter-spacing:1.742px;margin-left:-1.00px;">Q4-2025</span>
<span class="t" style="left:1794.6px;top:1238px;font-size:24px;color:#141a29;letter-spacing:-0.648px;">0%</span>
<div style="left:1794.2px;top:1277px;width:15.6px;height:15.6px;border-radius:50%;background:#8791a5"></div>
<span class="t" style="left:1819.2px;top:1275px;font-size:23px;color:#5d687b;letter-spacing:1.400px;margin-left:-1.00px;">Not started</span>
<span class="t" style="left:2044.4px;top:1256px;font-size:24px;color:#141a29;margin-left:-1.00px;">-</span>
<span class="t" style="left:2364.6px;top:1236px;font-size:24px;color:#141a29;letter-spacing:0.879px;margin-left:-1.00px;">15 Oct 2025</span>
<span class="t" style="left:2364.8px;top:1277px;font-size:22.5px;color:#5d687b;letter-spacing:0.254px;margin-left:-1.00px;">by Mark...</span>
<span class="t" style="left:2615.4px;top:1256px;font-size:24px;color:#141a29;margin-left:-1.00px;letter-spacing:0.5px;">Permanent</span>
<div style="left:241.6px;top:1331.8px;width:2577px;height:126px;background:#fff;"></div>
<div style="left:241.6px;top:1457.8px;width:2577px;height:2px;background:#e8eaee;"></div>
<div style="left:279.8px;top:1378.2px;width:33px;height:33px;background:#fff;border:2.5px solid #7f8b9e;border-radius:6px;"></div>
<span class="t" style="left:350.6px;top:1360px;font-size:24px;color:#5647a9;letter-spacing:0.401px;margin-left:-2.00px;">Increase Revenue by 10%</span>
<svg style="left:355.4px;top:1406px;" width="30" height="22" viewBox="0 0 30 22" fill="none"><g stroke="#8a95a8" stroke-width="1.7" stroke-linecap="round" stroke-linejoin="round"><path d="M2 2 V17.6 C2 19.2 2.8 20 4.4 20 H27"/><path d="M6.6 14.6 L12.6 8.4 L17 12.4 L24.4 5.4"/><path d="M19.4 5 H24.8 V10.4"/></g></svg>
<span class="t" style="left:399px;top:1407px;font-size:23.5px;color:#5d687b;letter-spacing:0.776px;">0 Key-results</span>
<div style="left:562.2px;top:1396.4px;width:1.8px;height:39.6px;background:#e5e8ec;"></div>
<svg style="left:585.6px;top:1406.6px;" width="30" height="22" viewBox="0 0 30 22" fill="none"><g stroke="#8a95a8" stroke-width="1.7" stroke-linecap="round" stroke-linejoin="round"><path d="M10.6 3.4 H27 M10.6 11 H27 M10.6 18.6 H27"/><path d="M1.6 3.6 L3.4 5.4 L6.6 1.6 M1.6 11.2 L3.4 13 L6.6 9.2"/><path d="M3.6 18.6 H4.2" stroke-width="2.8"/></g></svg>
<span class="t" style="left:628.5px;top:1407px;font-size:23.5px;color:#5d687b;letter-spacing:0.874px;">0 Initiatives</span>
<svg style="left:960.9px;top:1357px;" width="26" height="28" viewBox="0 0 26 28" fill="none"><g stroke="#8391a7" stroke-width="1.8" stroke-linejoin="round"><circle cx="13" cy="7.6" r="5.9"/><path d="M1.6 26.4 C1.6 20 6.6 17.2 13 17.2 C19.4 17.2 24.4 20 24.4 26.4 Z"/></g></svg>
<span class="t" style="left:920.6px;top:1412px;font-size:23px;color:#5d687b;letter-spacing:1.415px;margin-left:-2.00px;">Individual</span>
<div style="left:1214px;top:1362.6px;width:64px;height:64px;border-radius:50%;background:#88cdbb"></div>
<span class="t" style="left:1223.8px;top:1382px;font-size:30px;color:#fff;letter-spacing:1.735px;margin-left:-2.00px;">NM</span>
<span class="t" style="left:1364.8px;top:1384px;font-size:24px;color:#141a29;letter-spacing:0.191px;margin-left:-1.00px;">Sales</span>
<span class="t" style="left:1564.7px;top:1384px;font-size:24px;color:#141a29;letter-spacing:1.742px;margin-left:-1.00px;">Q4-2025</span>
<span class="t" style="left:1794.6px;top:1366px;font-size:24px;color:#141a29;letter-spacing:-0.648px;">0%</span>
<div style="left:1794.2px;top:1404.8px;width:15.6px;height:15.6px;border-radius:50%;background:#8791a5"></div>
<span class="t" style="left:1819.2px;top:1403px;font-size:23px;color:#5d687b;letter-spacing:1.400px;margin-left:-1.00px;">Not started</span>
<span class="t" style="left:2044.4px;top:1384px;font-size:24px;color:#141a29;margin-left:-1.00px;">-</span>
<span class="t" style="left:2364.8px;top:1384px;font-size:24px;color:#141a29;letter-spacing:0.848px;margin-left:-1.00px;">Not Available</span>
<span class="t" style="left:2615.4px;top:1384px;font-size:24px;color:#141a29;margin-left:-1.00px;letter-spacing:0.5px;">Permanent</span>
<div style="left:241.6px;top:1459.8px;width:2577px;height:126.2px;background:#fff;"></div>
<div style="left:241.6px;top:1586px;width:2577px;height:2px;background:#e8eaee;"></div>
<div style="left:279.8px;top:1506.2px;width:33px;height:33px;background:#fff;border:2.5px solid #7f8b9e;border-radius:6px;"></div>
<span class="t" style="left:350.6px;top:1488px;font-size:24px;color:#5647a9;letter-spacing:0.401px;margin-left:-2.00px;">Increase Revenue by 10%</span>
<svg style="left:355.6px;top:1534.6px;" width="30" height="22" viewBox="0 0 30 22" fill="none"><g stroke="#8a95a8" stroke-width="1.7" stroke-linecap="round" stroke-linejoin="round"><path d="M10.6 3.4 H27 M10.6 11 H27 M10.6 18.6 H27"/><path d="M1.6 3.6 L3.4 5.4 L6.6 1.6 M1.6 11.2 L3.4 13 L6.6 9.2"/><path d="M3.6 18.6 H4.2" stroke-width="2.8"/></g></svg>
<span class="t" style="left:399px;top:1535px;font-size:23.5px;color:#5d687b;letter-spacing:0.874px;">0 Initiatives</span>
<svg style="left:960.9px;top:1485px;" width="26" height="28" viewBox="0 0 26 28" fill="none"><g stroke="#8391a7" stroke-width="1.8" stroke-linejoin="round"><circle cx="13" cy="7.6" r="5.9"/><path d="M1.6 26.4 C1.6 20 6.6 17.2 13 17.2 C19.4 17.2 24.4 20 24.4 26.4 Z"/></g></svg>
<span class="t" style="left:920.6px;top:1540px;font-size:23px;color:#5d687b;letter-spacing:1.415px;margin-left:-2.00px;">Individual</span>
<div style="left:1214px;top:1490.6px;width:64px;height:64px;border-radius:50%;background:#88cdbb"></div>
<span class="t" style="left:1223.8px;top:1510px;font-size:30px;color:#fff;letter-spacing:1.735px;margin-left:-2.00px;">NM</span>
<span class="t" style="left:1364.8px;top:1512px;font-size:24px;color:#141a29;letter-spacing:0.191px;margin-left:-1.00px;">Sales</span>
<span class="t" style="left:1564.7px;top:1512px;font-size:24px;color:#141a29;letter-spacing:1.742px;margin-left:-1.00px;">Q4-2025</span>
<span class="t" style="left:1794.6px;top:1494px;font-size:24px;color:#141a29;letter-spacing:-0.648px;">0%</span>
<div style="left:1794.2px;top:1532.8px;width:15.6px;height:15.6px;border-radius:50%;background:#8791a5"></div>
<span class="t" style="left:1819.2px;top:1531px;font-size:23px;color:#5d687b;letter-spacing:1.400px;margin-left:-1.00px;">Not started</span>
<span class="t" style="left:2044.4px;top:1512px;font-size:24px;color:#141a29;margin-left:-1.00px;">-</span>
<span class="t" style="left:2364.8px;top:1512px;font-size:24px;color:#141a29;letter-spacing:0.848px;margin-left:-1.00px;">Not Available</span>
<span class="t" style="left:2615.4px;top:1512px;font-size:24px;color:#141a29;margin-left:-1.00px;letter-spacing:0.5px;">Permanent</span>
<div style="left:241.6px;top:1588px;width:2577px;height:126px;background:#fff;"></div>
<div style="left:241.6px;top:1714px;width:2577px;height:2px;background:#e8eaee;"></div>
<div style="left:279.8px;top:1634.2px;width:33px;height:33px;background:#fff;border:2.5px solid #7f8b9e;border-radius:6px;"></div>
<span class="t" style="left:350.6px;top:1616px;font-size:24px;color:#5647a9;letter-spacing:0.401px;margin-left:-2.00px;">Increase Revenue by 10%</span>
<svg style="left:355.4px;top:1662px;" width="30" height="22" viewBox="0 0 30 22" fill="none"><g stroke="#8a95a8" stroke-width="1.7" stroke-linecap="round" stroke-linejoin="round"><path d="M2 2 V17.6 C2 19.2 2.8 20 4.4 20 H27"/><path d="M6.6 14.6 L12.6 8.4 L17 12.4 L24.4 5.4"/><path d="M19.4 5 H24.8 V10.4"/></g></svg>
<span class="t" style="left:399px;top:1663px;font-size:23.5px;color:#5d687b;letter-spacing:0.776px;">0 Key-results</span>
<div style="left:562.2px;top:1652.4px;width:1.8px;height:39.6px;background:#e5e8ec;"></div>
<svg style="left:585.6px;top:1662.6px;" width="30" height="22" viewBox="0 0 30 22" fill="none"><g stroke="#8a95a8" stroke-width="1.7" stroke-linecap="round" stroke-linejoin="round"><path d="M10.6 3.4 H27 M10.6 11 H27 M10.6 18.6 H27"/><path d="M1.6 3.6 L3.4 5.4 L6.6 1.6 M1.6 11.2 L3.4 13 L6.6 9.2"/><path d="M3.6 18.6 H4.2" stroke-width="2.8"/></g></svg>
<span class="t" style="left:628.5px;top:1663px;font-size:23.5px;color:#5d687b;letter-spacing:0.874px;">0 Initiatives</span>
<svg style="left:960.9px;top:1613px;" width="26" height="28" viewBox="0 0 26 28" fill="none"><g stroke="#8391a7" stroke-width="1.8" stroke-linejoin="round"><circle cx="13" cy="7.6" r="5.9"/><path d="M1.6 26.4 C1.6 20 6.6 17.2 13 17.2 C19.4 17.2 24.4 20 24.4 26.4 Z"/></g></svg>
<span class="t" style="left:920.6px;top:1668px;font-size:23px;color:#5d687b;letter-spacing:1.415px;margin-left:-2.00px;">Individual</span>
<svg style="left:1213.9px;top:1618.6px;" width="64" height="64" viewBox="0 0 64 64" fill="none"><defs><clipPath id="av1245_1650"><circle cx="32" cy="32" r="32"/></clipPath><filter id="bl1245_1650" x="-10%" y="-10%" width="120%" height="120%"><feGaussianBlur stdDeviation="1.3"/></filter><linearGradient id="bg1245_1650" x1="0" y1="0" x2="0" y2="1"><stop offset="0" stop-color="#7f8e96"/><stop offset=".45" stop-color="#8a9aa4"/><stop offset=".62" stop-color="#7d8c95"/><stop offset=".74" stop-color="#b7c3ca"/><stop offset="1" stop-color="#a9b5bc"/></linearGradient></defs><g clip-path="url(#av1245_1650)"><g filter="url(#bl1245_1650)"><rect x="-6" y="-6" width="76" height="76" fill="url(#bg1245_1650)"/><path d="M8 70 C9 58 18 53 35 53 C52 53 60 58 62 70 Z" fill="#7a4a2e"/><path d="M25 50 H46 V58 C41 64 30 64 25 58 Z" fill="#7d5645"/><ellipse cx="35.6" cy="36.5" rx="20.4" ry="23" fill="#85604e"/><ellipse cx="35.6" cy="25" rx="19.6" ry="15" fill="#85604e"/><ellipse cx="35.6" cy="40" rx="14" ry="13" fill="#8e6858"/><path d="M13 30 C8 12 20 -3 36 -3 C52 -3 64 12 59 30 C58 24 55 17 50 14.5 C42 13 30 13 22 15.5 C17 19 14.5 24 13 30 Z" fill="#16130f"/><path d="M13 30 C13.5 26 15 22 18 19 L19 28 C17 29 16.5 33 16.8 37 C14.5 36 13.2 33 13 30 Z" fill="#16130f"/><path d="M59 30 C58.5 26 57 22 54 19 L53.5 28 C55 29 55.5 33 55.2 37 C57.5 36 58.8 33 59 30 Z" fill="#16130f"/><path d="M28.6 44.6 C32 46 39 46 42.2 44.6 C41 49.6 30 49.6 28.6 44.6 Z" fill="#f3ebe6"/><path d="M26.5 43.6 C31 45.2 40 45.2 44.4 43.6" stroke="#5e3c30" stroke-width="1.4" fill="none"/><path d="M19.6 24.6 C23 22.8 27 22.8 30 24 M41 24 C44 22.8 48.4 22.8 51.6 24.6" stroke="#2a1b15" stroke-width="2.2" stroke-linecap="round"/><ellipse cx="25" cy="28" rx="3.8" ry="1.8" fill="#2b1c16"/><ellipse cx="45.4" cy="28" rx="3.8" ry="1.8" fill="#2b1c16"/><path d="M32.4 33 C31.2 37.6 32.4 39.2 35.4 39.4 C38.4 39.2 39.6 37.6 38.4 33" stroke="#6a4838" stroke-width="1.6" fill="none"/></g></g></svg>
<span class="t" style="left:1364.8px;top:1640px;font-size:24px;color:#141a29;letter-spacing:0.561px;margin-left:-1.00px;">Customer ...</span>
<span class="t" style="left:1564.7px;top:1640px;font-size:24px;color:#141a29;letter-spacing:1.742px;margin-left:-1.00px;">Q4-2025</span>
<span class="t" style="left:1794.6px;top:1622px;font-size:24px;color:#141a29;letter-spacing:-0.648px;">0%</span>
<div style="left:1794.2px;top:1660.8px;width:15.6px;height:15.6px;border-radius:50%;background:#8791a5"></div>
<span class="t" style="left:1819.2px;top:1659px;font-size:23px;color:#5d687b;letter-spacing:1.400px;margin-left:-1.00px;">Not started</span>
<span class="t" style="left:2044.4px;top:1640px;font-size:24px;color:#141a29;margin-left:-1.00px;">-</span>
<span class="t" style="left:2364.6px;top:1620px;font-size:24px;color:#141a29;letter-spacing:0.879px;margin-left:-1.00px;">15 Oct 2025</span>
<span class="t" style="left:2364.8px;top:1660px;font-size:22.5px;color:#5d687b;letter-spacing:0.254px;margin-left:-1.00px;">by Mark...</span>
<span class="t" style="left:2615.4px;top:1640px;font-size:24px;color:#141a29;margin-left:-1.00px;letter-spacing:0.5px;">Permanent</span>
<span class="t" style="left:2614.4px;top:1036px;font-size:19px;color:#1d2433;letter-spacing:0.55px;">WORKER TYPE</span>
<div style="left:1330.2px;top:1075px;width:2px;height:541px;background:#eceef2;"></div>
<div style="left:1330.2px;top:1014.6px;width:2px;height:60px;background:#f5f6f8;"></div>
<div style="left:1332.2px;top:1014.6px;width:18px;height:601.4px;background:linear-gradient(to right, rgba(50,60,80,.10), rgba(50,60,80,.03) 55%, rgba(50,60,80,0));"></div>
<div style="left:240.6px;top:1073.8px;width:2579px;height:1.6px;background:#e9ebef;"></div>
<div style="left:2643.8px;top:1014.6px;width:21px;height:601.4px;background:linear-gradient(to left, rgba(50,60,80,.13), rgba(50,60,80,.03) 60%, rgba(50,60,80,0));"></div>
<div style="left:2664.8px;top:1014.6px;width:154.8px;height:60.6px;background:#f1f2f5;"></div>
<div style="left:2664.8px;top:1075.2px;width:153.8px;height:126.8px;background:#fbfbfc;"></div>
<svg style="left:2715.6px;top:1120.8px;" width="12" height="32" viewBox="0 0 12 32" fill="none"><g stroke="#8591a4" stroke-width="2"><circle cx="6" cy="6.3" r="2.6"/><circle cx="6" cy="16" r="2.6"/><circle cx="6" cy="25.7" r="2.6"/></g></svg>
<div style="left:2664.8px;top:1204px;width:153.8px;height:125.8px;background:#fff;"></div>
<svg style="left:2715.6px;top:1248.8px;" width="12" height="32" viewBox="0 0 12 32" fill="none"><g stroke="#8591a4" stroke-width="2"><circle cx="6" cy="6.3" r="2.6"/><circle cx="6" cy="16" r="2.6"/><circle cx="6" cy="25.7" r="2.6"/></g></svg>
<div style="left:2664.8px;top:1331.8px;width:153.8px;height:126px;background:#fff;"></div>
<svg style="left:2715.6px;top:1376.6px;" width="12" height="32" viewBox="0 0 12 32" fill="none"><g stroke="#8591a4" stroke-width="2"><circle cx="6" cy="6.3" r="2.6"/><circle cx="6" cy="16" r="2.6"/><circle cx="6" cy="25.7" r="2.6"/></g></svg>
<div style="left:2664.8px;top:1459.8px;width:153.8px;height:126.2px;background:#fff;"></div>
<svg style="left:2715.6px;top:1504.6px;" width="12" height="32" viewBox="0 0 12 32" fill="none"><g stroke="#8591a4" stroke-width="2"><circle cx="6" cy="6.3" r="2.6"/><circle cx="6" cy="16" r="2.6"/><circle cx="6" cy="25.7" r="2.6"/></g></svg>
<div style="left:2664.8px;top:1588px;width:153.8px;height:126px;background:#fff;"></div>
<svg style="left:2715.6px;top:1632.6px;" width="12" height="32" viewBox="0 0 12 32" fill="none"><g stroke="#8591a4" stroke-width="2"><circle cx="6" cy="6.3" r="2.6"/><circle cx="6" cy="16" r="2.6"/><circle cx="6" cy="25.7" r="2.6"/></g></svg>
<div style="left:2664.2px;top:1014.6px;width:1.4px;height:601.4px;background:#e6e8ec;"></div>
<span class="t" style="left:2698.4px;top:1036px;font-size:19px;color:#1d2433;letter-spacing:0.770px;">ACTIONS</span>
<div style="left:2818px;top:1075px;width:1.6px;height:541px;background:#e8eaee;"></div>
<div style="left:240.6px;top:1075px;width:1.6px;height:541px;background:#e8eaee;"></div>
<div style="left:2724px;top:1480px;width:95.8px;height:96px;background:#3c4153;border-radius:14.5px;"></div>
<svg style="left:2748px;top:1504px;" width="48" height="48" viewBox="0 0 48 48" fill="none"><path d="M19.3 16.6 L38.5 45" stroke="#fff" stroke-width="6.7" stroke-linecap="round"/><path d="M20.1 17.8 L22 20.7" stroke="#3c4153" stroke-width="1.5" stroke-linecap="round"/><path d="M40 0 Q41.64 6.56 48.2 8.2 Q41.64 9.84 40 16.4 Q38.36 9.84 31.8 8.2 Q38.36 6.56 40 0 Z" fill="#fff"/><path d="M6.5 -0.6 Q7.204 5.096 12.9 5.8 Q7.204 6.504 6.5 12.2 Q5.796 6.504 0.1 5.8 Q5.796 5.096 6.5 -0.6 Z" fill="#fff"/><path d="M7.1 26.1 Q7.51 29.79 11.2 30.2 Q7.51 30.61 7.1 34.3 Q6.69 30.61 3 30.2 Q6.69 29.79 7.1 26.1 Z" fill="#fff"/></svg>
</div></body></html>
